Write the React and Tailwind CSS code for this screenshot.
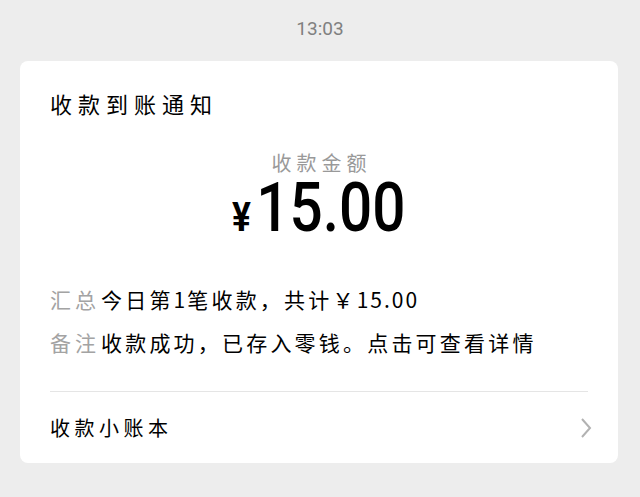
import React from 'react';

const cjk = { fontFamily: '"Noto Sans CJK SC", "Noto Sans", sans-serif' };
const num = { fontFamily: 'Roboto, "Liberation Sans", sans-serif' };

const Row = ({ label, children }) => (
    <div className="text-[21px] leading-[43px] whitespace-nowrap">
        <span className="text-[#a3a3a3] tracking-[4px]">{label}</span>
        <span className="text-black tracking-[3.2px] ml-[1px]">{children}</span>
    </div>
);

const App = () => {
    return (
        <div className="w-[640px] h-[497px] bg-[#ededed] overflow-hidden" style={cjk}>
            <div className="pt-[17px] h-[61px] text-center text-[19px] leading-[24px] text-[#808080]" style={num}>
                13:03
            </div>

            <div className="mx-[20px] w-[598px] bg-white rounded-[8px] px-[30px]">
                <div className="pt-[26px] text-[22px] leading-[32px] tracking-[6px] text-black">
                    收款到账通知
                </div>

                {/* Amount */}
                <div className="flex flex-col items-center mt-[31px]">
                    <div className="text-[20px] leading-[26px] tracking-[5px] pl-[5px] text-[#999999]">收款金额</div>
                    <div className="mt-[2px] h-[60px] leading-[60px] text-black font-medium whitespace-nowrap scale-x-[0.86]" style={num}>
                        <span className="text-[41px] font-bold mr-[6px]">¥</span>
                        <span className="text-[68px]">15.00</span>
                    </div>
                </div>

                <div className="mt-[40px]">
                    <Row label="汇总">
                        今日第<span className="tracking-[2px]">1</span>笔收款，共计￥<span className="tracking-[2px]">15.00</span>
                    </Row>
                    <Row label="备注">收款成功，已存入零钱。点击可查看详情</Row>
                </div>

                <div className="mt-[27px] border-t border-[#e5e5e5] h-[72px] flex items-center justify-between">
                    <span className="text-[20px] tracking-[4.5px] text-black">收款小账本</span>
                    <svg width="12" height="22" viewBox="0 0 12 22" className="mr-[-4px]">
                        <path d="M2 2 L10 11 L2 20" fill="none" stroke="#b2b2b2" strokeWidth="2" />
                    </svg>
                </div>
            </div>
        </div>
    );
};

export default App;
